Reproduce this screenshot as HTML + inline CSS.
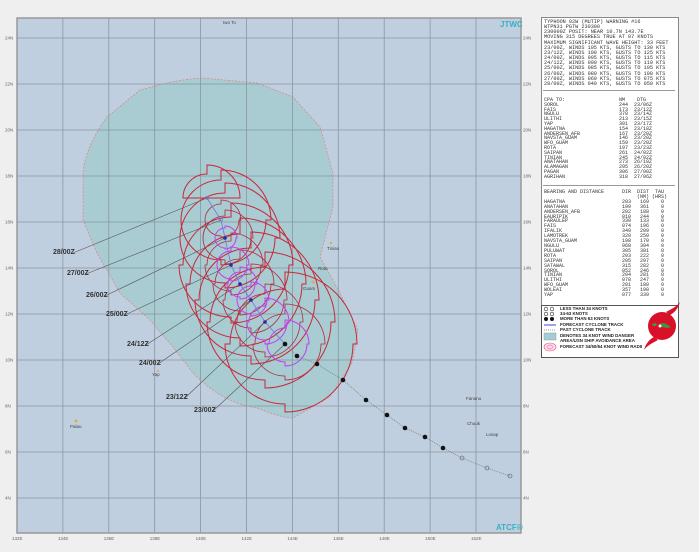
<!DOCTYPE html>
<html><head><meta charset="utf-8"><style>
html,body{margin:0;padding:0;background:#efefef;width:699px;height:552px;overflow:hidden}
.t{position:absolute;font-family:"Liberation Mono",monospace;color:#333;white-space:pre;margin:0}
.lg{position:absolute;font-family:"Liberation Sans",sans-serif;font-weight:bold;font-size:4.4px;color:#222;white-space:pre}
</style></head><body>
<svg id="map" width="699" height="552" style="position:absolute;left:0;top:0" xmlns="http://www.w3.org/2000/svg">
<rect x="17" y="18" width="504" height="515" fill="#c0cfe0" stroke="#999" stroke-width="1.5"/>
<path d="M202,78 C170,80 150,88 140,90 L107,117 C90,140 84,160 83,173 L83,220 L97,253 L120,293 L150,320 L173,347 L193,373 C220,400 240,405 257,408 C275,415 285,418 293,418 L330,397 L352,363 L358,330 L340,293 L320,257 L333,207 L333,173 L320,127 L293,97 L257,83 Z" fill="#a8ccd1" stroke="#d98a8a" stroke-width="0.8" stroke-dasharray="2,1.5"/>
<g id="grid" stroke="#8a96a0" stroke-width="0.8"></g>
<g id="radii" fill="none"></g>
<g font-family="Liberation Sans,sans-serif" font-size="4.5" fill="#666" id="lbl"></g>
<g font-family="Liberation Sans,sans-serif" font-size="4.5" fill="#444">
<text x="223" y="24">Iwo To</text>
<text x="327" y="250">Tinian</text>
<text x="318" y="270">Rota</text>
<text x="303" y="290">Guam</text>
<text x="152" y="376">Yap</text>
<text x="70" y="428">Palau</text>
<text x="466" y="400">Fananu</text>
<text x="467" y="425">Chuuk</text>
<text x="486" y="436">Losap</text>
</g>
<g fill="#d8b040"><circle cx="76" cy="421" r="1.5"/><circle cx="313" cy="282" r="1.5"/><circle cx="331" cy="243" r="1.2"/><circle cx="158" cy="371" r="1"/></g>
<g font-family="Liberation Sans,sans-serif" font-size="7" font-weight="bold" fill="#333">
<text x="53" y="254">28/00Z</text><text x="67" y="275">27/00Z</text><text x="86" y="297">26/00Z</text><text x="106" y="316">25/00Z</text><text x="127" y="346">24/12Z</text><text x="139" y="365">24/00Z</text><text x="166" y="399">23/12Z</text><text x="194" y="412">23/00Z</text>
</g>
<g font-family="Liberation Sans,sans-serif" font-size="8" font-weight="bold" fill="#3ab0c0">
<text x="500" y="27">JTWC</text><text x="496" y="530">ATCF®</text>
</g>
</svg>
<div style="position:absolute;left:541px;top:17px;width:136px;height:288px;background:#fff;border:1px solid #888"></div>
<div style="position:absolute;left:543px;top:90px;width:132px;height:1px;background:#999"></div>
<div style="position:absolute;left:543px;top:185px;width:132px;height:1px;background:#999"></div>
<pre class="t" style="left:544px;top:20px;font-size:5.2px;line-height:5.15px">TYPHOON 02W (MUTIP) WARNING #16
WTPN31 PGTW 230300
230000Z POSIT: NEAR 10.7N 143.7E
MOVING 315 DEGREES TRUE AT 07 KNOTS
MAXIMUM SIGNIFICANT WAVE HEIGHT: 33 FEET
23/00Z, WINDS 105 KTS, GUSTS TO 130 KTS
23/12Z, WINDS 100 KTS, GUSTS TO 125 KTS
24/00Z, WINDS 095 KTS, GUSTS TO 115 KTS
24/12Z, WINDS 090 KTS, GUSTS TO 110 KTS
25/00Z, WINDS 085 KTS, GUSTS TO 105 KTS
26/00Z, WINDS 080 KTS, GUSTS TO 100 KTS
27/00Z, WINDS 060 KTS, GUSTS TO 075 KTS
28/00Z, WINDS 040 KTS, GUSTS TO 050 KTS</pre>
<pre class="t" style="left:544px;top:98px;font-size:5px;line-height:4.8px">CPA TO:                  NM    DTG
SOROL                    244  23/06Z
FAIS                     173  23/12Z
NGULU                    370  23/14Z
ULITHI                   213  23/15Z
YAP                      301  23/17Z
HAGATNA                  154  23/18Z
ANDERSEN_AFB             167  23/20Z
NAVSTA_GUAM              146  23/20Z
WFO_GUAM                 159  23/20Z
ROTA                     197  23/23Z
SAIPAN                   261  24/02Z
TINIAN                   245  24/02Z
ANATAHAN                 273  26/10Z
ALAMAGAN                 295  26/20Z
PAGAN                    306  27/00Z
AGRIHAN                  318  27/06Z</pre>
<pre class="t" style="left:544px;top:190px;font-size:5px;line-height:4.9px">BEARING AND DISTANCE      DIR  DIST  TAU
                               (NM) (HRS)
HAGATNA                   203   169    0
ANATAHAN                  199   361    0
ANDERSEN_AFB              202   188    0
EAURIPIK                  010   244    0
FARAULEP                  339   133    0
FAIS                      074   196    0
IFALIK                    349   209    0
LAMOTREK                  320   250    0
NAVSTA_GUAM               198   170    0
NGULU                     068   394    0
PULUWAT                   305   381    0
ROTA                      203   222    0
SAIPAN                    205   297    0
SATAWAL                   315   282    0
SOROL                     052   246    0
TINIAN                    204   281    0
ULITHI                    078   247    0
WFO_GUAM                  201   180    0
WOLEAI                    357   198    0
YAP                       077   339    0</pre>
<div style="position:absolute;left:541px;top:305px;width:136px;height:51px;background:#fff;border:1px solid #555"></div>
<svg width="699" height="552" style="position:absolute;left:0;top:0" xmlns="http://www.w3.org/2000/svg">
<g stroke="#333" stroke-width="0.6" fill="none"><circle cx="546" cy="309" r="1.8"/><circle cx="552" cy="309" r="1.8"/><circle cx="546" cy="314" r="1.8"/><circle cx="552" cy="314" r="1.8"/></g>
<circle cx="546" cy="319" r="2" fill="#111"/><circle cx="552" cy="319" r="2" fill="#111"/>
<line x1="544" y1="325" x2="556" y2="325" stroke="#4444cc" stroke-width="1"/>
<line x1="544" y1="330" x2="556" y2="330" stroke="#777" stroke-width="0.8" stroke-dasharray="1,1"/>
<rect x="544" y="333" width="12" height="7" fill="#a8ccd1" stroke="#7aa" stroke-width="0.5"/>
<ellipse cx="550" cy="347" rx="6" ry="4" fill="#fde" stroke="#e55" stroke-width="0.6"/>
<ellipse cx="550" cy="347" rx="3" ry="2" fill="none" stroke="#c4c" stroke-width="0.5"/>
<circle cx="662" cy="326" r="14" fill="#d8102a"/>
<path d="M666,312 C674,308 678,305 680,302 C678,309 674,313 670,315Z" fill="#d8102a"/>
<path d="M658,340 C650,344 646,347 644,350 C646,343 650,339 654,337Z" fill="#d8102a"/>
<path d="M652,324 l3,-1 l2,1 l-1,2 l-3,0Z M659,324 l5,-1 l4,2 l3,2 l-4,1 l-5,-1Z" fill="#3a9a3a"/>
<circle cx="660" cy="326" r="1.5" fill="#fff"/>
</svg>
<div class="lg" style="left:560px;top:306px">LESS THAN 34 KNOTS</div>
<div class="lg" style="left:560px;top:311px">34-63 KNOTS</div>
<div class="lg" style="left:560px;top:316px">MORE THAN 63 KNOTS</div>
<div class="lg" style="left:560px;top:322px">FORECAST CYCLONE TRACK</div>
<div class="lg" style="left:560px;top:327px">PAST CYCLONE TRACK</div>
<div class="lg" style="left:560px;top:333px">DENOTES 34 KNOT WIND DANGER</div>
<div class="lg" style="left:560px;top:338px">AREA/USN SHIP AVOIDANCE AREA</div>
<div class="lg" style="left:560px;top:344px">FORECAST 34/50/64 KNOT WIND RADII</div>
<script>
(function(){
var NS="http://www.w3.org/2000/svg";
function el(p,n,a,t){var e=document.createElementNS(NS,n);for(var k in a)e.setAttribute(k,a[k]);if(t)e.textContent=t;p.appendChild(e);return e;}
var g=document.getElementById('grid'),L=document.getElementById('lbl');
for(var i=0;i<=10;i++){var x=17+i*45.9;if(i>0)el(g,'line',{x1:x,y1:18,x2:x,y2:533});
 el(L,'text',{x:x-5,y:540},(132+2*i)+'E');}
for(var j=0;j<=10;j++){var y=38+j*46;el(g,'line',{x1:17,y1:y,x2:521,y2:y});
 el(L,'text',{x:5,y:y+1.5},(24-2*j)+'N');el(L,'text',{x:523,y:y+1.5},(24-2*j)+'N');}
var r=document.getElementById('radii');
function q(cx,cy,a,col,w){var d='M'+cx+','+(cy-a[0])+' A'+a[0]+','+a[0]+' 0 0 1 '+(cx+a[0])+','+cy+' L'+(cx+a[1])+','+cy+' A'+a[1]+','+a[1]+' 0 0 1 '+cx+','+(cy+a[1])+' L'+cx+','+(cy+a[2])+' A'+a[2]+','+a[2]+' 0 0 1 '+(cx-a[2])+','+cy+' L'+(cx-a[3])+','+cy+' A'+a[3]+','+a[3]+' 0 0 1 '+cx+','+(cy-a[3])+' Z';
 el(r,'path',{d:d,stroke:col,'stroke-width':w,fill:'none'});}
var P=[[285,344],[265,322],[251,300],[240,284],[231,265],[225,238],[221,220],[207,198]];
var R34=[[72,68,60,55],[70,66,58,55],[68,64,56,52],[66,62,54,50],[62,58,52,48],[55,50,45,45],[50,45,40,40],[33,0,0,24]];
var R50=[[40,36,32,30],[38,35,30,28],[36,33,28,26],[34,31,27,25],[32,30,26,24],[28,26,22,22],[20,18,16,16],[0,0,0,0]];
var R64=[[24,22,18,16],[24,22,18,16],[18,16,14,14],[17,15,13,12],[18,16,14,14],[12,11,10,10],[0,0,0,0],[0,0,0,0]];
var LB=[[195,410],[167,397],[140,363],[128,344],[107,314],[87,295],[68,273],[55,252]];
for(i=0;i<8;i++){el(r,'line',{x1:LB[i][0]+18,y1:LB[i][1]+1,x2:P[i][0],y2:P[i][1],stroke:'#555','stroke-width':0.6});}
for(i=0;i<8;i++){q(P[i][0],P[i][1],R34[i],'#c8283c',1);if(R50[i][0])q(P[i][0],P[i][1],R50[i],'#b02a40',0.8);}
for(i=0;i<6;i++)q(P[i][0],P[i][1],R64[i],'#c040f0',1);
el(r,'polyline',{points:P.map(function(p){return p.join(',')}).join(' '),stroke:'#6a7ad8','stroke-width':0.8,fill:'none'});
var past=[[285,344],[297,356],[317,364],[343,380],[366,400],[387,415],[405,428],[425,437],[443,448],[462,458],[487,468],[510,476]];
el(r,'polyline',{points:past.map(function(p){return p.join(',')}).join(' '),stroke:'#777','stroke-width':0.7,'stroke-dasharray':'1,1',fill:'none'});
for(i=1;i<past.length;i++){var p=past[i];if(i<9)el(r,'circle',{cx:p[0],cy:p[1],r:2.3,fill:'#111'});else el(r,'circle',{cx:p[0],cy:p[1],r:2,fill:'none',stroke:'#555','stroke-width':0.6});}
el(r,'circle',{cx:285,cy:344,r:2.3,fill:'#111'});
for(i=1;i<6;i++)el(r,'circle',{cx:P[i][0],cy:P[i][1],r:1.8,fill:'#2a2a9a'});
for(i=6;i<8;i++)el(r,'circle',{cx:P[i][0],cy:P[i][1],r:1.6,fill:'none',stroke:'#6a7ad8','stroke-width':0.6});
})();
</script>
</body></html>
